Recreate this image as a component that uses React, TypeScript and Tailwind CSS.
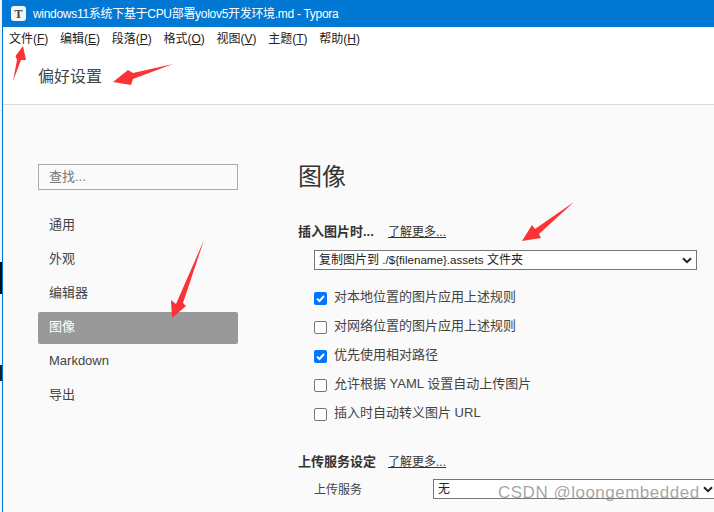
const sans = "font-['Liberation_Sans','Noto_Sans_CJK_SC',sans-serif]";

const navItems = ['通用', '外观', '编辑器', '图像', 'Markdown', '导出'];
const menus: [string, string][] = [['文件', 'F'], ['编辑', 'E'], ['段落', 'P'], ['格式', 'O'], ['视图', 'V'], ['主题', 'T'], ['帮助', 'H']];
const checks: [string, boolean][] = [
  ['对本地位置的图片应用上述规则', true],
  ['对网络位置的图片应用上述规则', false],
  ['优先使用相对路径', true],
  ['允许根据 YAML 设置自动上传图片', false],
  ['插入时自动转义图片 URL', false],
];

function Check({ on }: { on: boolean }) {
  return on ? (
    <span className="w-[13px] h-[13px] rounded-[2px] bg-[#0075ff] flex items-center justify-center shrink-0">
      <svg width="11" height="11" viewBox="0 0 11 11"><path d="M2 5.6 L4.5 8 L9 3" fill="none" stroke="#fff" strokeWidth="2" /></svg>
    </span>
  ) : (
    <span className="w-[13px] h-[13px] rounded-[2px] border border-[#767676] bg-white shrink-0" />
  );
}

function Chevron() {
  return (
    <svg width="10" height="7" viewBox="0 0 10 7" className="shrink-0"><path d="M1 1.2 L5 5.2 L9 1.2" fill="none" stroke="#222" strokeWidth="2" /></svg>
  );
}

export default function App() {
  return (
    <div className={`relative w-[714px] h-[512px] overflow-hidden bg-[#fafafa] flex ${sans}`}>
      <div className="w-[2px] flex flex-col bg-[#f2f2f2] shrink-0">
        <div className="h-[262px]" />
        <div className="h-[32px] bg-[#111]" />
        <div className="h-[71px]" />
        <div className="h-[16px] bg-[#222]" />
      </div>
      <div className="flex-1 min-w-0 flex flex-col border-l border-[#0078d4]">
        <div className="h-[27px] bg-[#0078d4] flex items-center pl-[9px] gap-[7px] -ml-px shrink-0">
          <span className="w-[15px] h-[15px] rounded-[3px] bg-[#f4f4f4] flex items-center justify-center text-[12px] font-bold leading-none text-[#444] font-['Liberation_Serif',serif]">T</span>
          <span className="text-[12px] tracking-[-0.3px] text-white leading-none whitespace-nowrap">windows11系统下基于CPU部署yolov5开发环境.md - Typora</span>
        </div>
        <div className="bg-white h-[78px] border-b border-[#dcdcdc] shrink-0 flex flex-col">
          <div className="flex gap-[11.7px] pl-[6px] pt-[4px] text-[12px] leading-[16px] text-[#222]">
            {menus.map(([n, k]) => (
              <span key={k} className="whitespace-nowrap">{n}(<span className="underline">{k}</span>)</span>
            ))}
          </div>
          <div className="pl-[35px] pt-[20px] text-[16px] leading-[20px] text-[#444]">偏好设置</div>
        </div>
        <div className="flex flex-1 min-h-0">
          <div className="w-[235px] shrink-0 pl-[35px] pt-[59px]">
            <div className="w-[200px] h-[26px] border border-[#aaa] flex items-center pl-[10px] text-[13px] text-[#777]">查找...</div>
            <div className="mt-[20px] flex flex-col gap-[2px]">
              {navItems.map((n) => (
                <div key={n} className={`w-[200px] h-[32px] rounded-[2px] flex items-center pl-[11px] pb-[2px] text-[13px] ${n === '图像' ? 'bg-[#999999] text-white' : 'text-[#444]'}`}>{n}</div>
              ))}
            </div>
          </div>
          <div className="flex-1 min-w-0 pl-[60px] pt-[56px]">
            <div className="text-[24px] leading-[32px] text-[#333]">图像</div>
            <div className="mt-[30px] flex items-center h-[18px]">
              <span className="font-bold text-[13px] text-[#333] w-[90px] whitespace-nowrap">插入图片时...</span>
              <span className="underline text-[12px] text-[#333]">了解更多...</span>
            </div>
            <div className="mt-[9px] ml-[16px] w-[383px] h-[20px] bg-white border border-[#767676] flex items-center justify-between pl-[4px] pr-[4px] text-[12px] text-[#222]">
              <span>复制图片到 <span className="text-[11.6px]">./${'{'}filename{'}'}.assets</span> 文件夹</span>
              <Chevron />
            </div>
            <div className="mt-[19px] ml-[16px] flex flex-col gap-[11px]">
              {checks.map(([t, on]) => (
                <div key={t} className="flex items-center gap-[7px] h-[18px] text-[13px] text-[#444]">
                  <Check on={on} />
                  <span className="whitespace-nowrap pb-[2px]">{t}</span>
                </div>
              ))}
            </div>
            <div className="mt-[30px] flex items-center h-[18px]">
              <span className="font-bold text-[13px] text-[#333] w-[90px] whitespace-nowrap">上传服务设定</span>
              <span className="underline text-[12px] text-[#333]">了解更多...</span>
            </div>
            <div className="mt-[8px] ml-[16px] flex items-center text-[12px] text-[#444]">
              <span className="w-[119px] shrink-0 pt-[2px]">上传服务</span>
              <div className="w-[285px] h-[20px] bg-white border border-[#767676] flex items-center justify-between pl-[4px] pr-[4px] text-[#222] shrink-0">
                <span>无</span>
                <Chevron />
              </div>
            </div>
          </div>
        </div>
      </div>

      <svg className="absolute left-0 top-0 pointer-events-none" width="714" height="512" viewBox="0 0 714 512">
        <g fill="#fb3236">
          <polygon points="23,46 26,60 21,60 13,81 17,60 15.5,56" />
          <polygon points="173,64 133,73 128,70 113,82 131,85 133,79" />
          <polygon points="204,240 183,303 186,306 172,318 171,300 176,304" />
          <polygon points="574,202 539,234 541,238 522,241 532,225 535,229" />
        </g>
      </svg>

      <div className="absolute left-[498px] top-[483px] text-[17px] leading-[20px] tracking-[0.5px] text-[#9a9a9a]/90 font-['Liberation_Sans',sans-serif] whitespace-nowrap">CSDN @loongembedded</div>
    </div>
  );
}
